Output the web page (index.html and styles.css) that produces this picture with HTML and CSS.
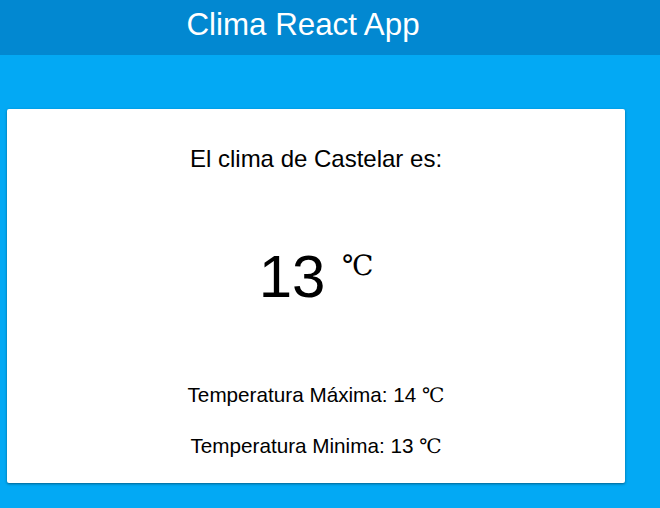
FILE: index.html
```html
<!DOCTYPE html>
<html lang="es">
<head>
<meta charset="utf-8">
<title>Clima React App</title>
<link rel="stylesheet" href="styles.css">
</head>
<body>
<header class="appbar">
  <div class="appbar-inner"><h1 class="title">Clima React App</h1></div>
</header>
<main class="content">
  <section class="card">
    <p class="city">El clima de Castelar es:</p>
    <p class="temp">13 <span class="unit unit-big">℃</span></p>
    <p class="minmax minmax-max">Temperatura Máxima: 14 <span class="unit">℃</span></p>
    <p class="minmax minmax-min">Temperatura Minima: 13 <span class="unit">℃</span></p>
  </section>
</main>
</body>
</html>
```
FILE: styles.css
```css
html, body {
  margin: 0;
  padding: 0;
}
body {
  background: #03a9f4;
  font-family: "Liberation Sans", Arial, sans-serif;
  color: #000;
  width: 660px;
  height: 508px;
  overflow: hidden;
}
.appbar {
  background: #0288d1;
  height: 55px;
  display: flex;
  align-items: center;
}
.appbar-inner {
  width: 606px;
  display: flex;
  justify-content: center;
}
.title {
  margin: 0;
  color: #fff;
  font-weight: normal;
  font-size: 31.3px;
  line-height: 1;
  padding-bottom: 6px;
}
.content {
  padding: 54px 0 0 7px;
}
.card {
  box-sizing: border-box;
  width: 618px;
  height: 374px;
  background: #fff;
  border-radius: 2px;
  box-shadow: 0 1px 3px rgba(0,0,0,0.25), 0 1px 2px rgba(0,0,0,0.2);
  text-align: center;
  padding-top: 36px;
}
.city {
  margin: 0;
  font-size: 24px;
  line-height: 28px;
}
.temp {
  margin: 69px 0 0;
  font-size: 60px;
  line-height: 69px;
}
.unit {
  font-family: "DejaVu Serif", "Liberation Serif", serif;
}
.unit-big {
  font-size: 28px;
  vertical-align: top;
  line-height: 1;
  position: relative;
  top: 10px;
}
.minmax {
  margin: 0;
  font-size: 20.7px;
  line-height: 24px;
}
.minmax .unit {
  font-size: 20px;
}
.minmax-max {
  margin-top: 72px;
}
.minmax-min {
  margin-top: 27px;
}
```
